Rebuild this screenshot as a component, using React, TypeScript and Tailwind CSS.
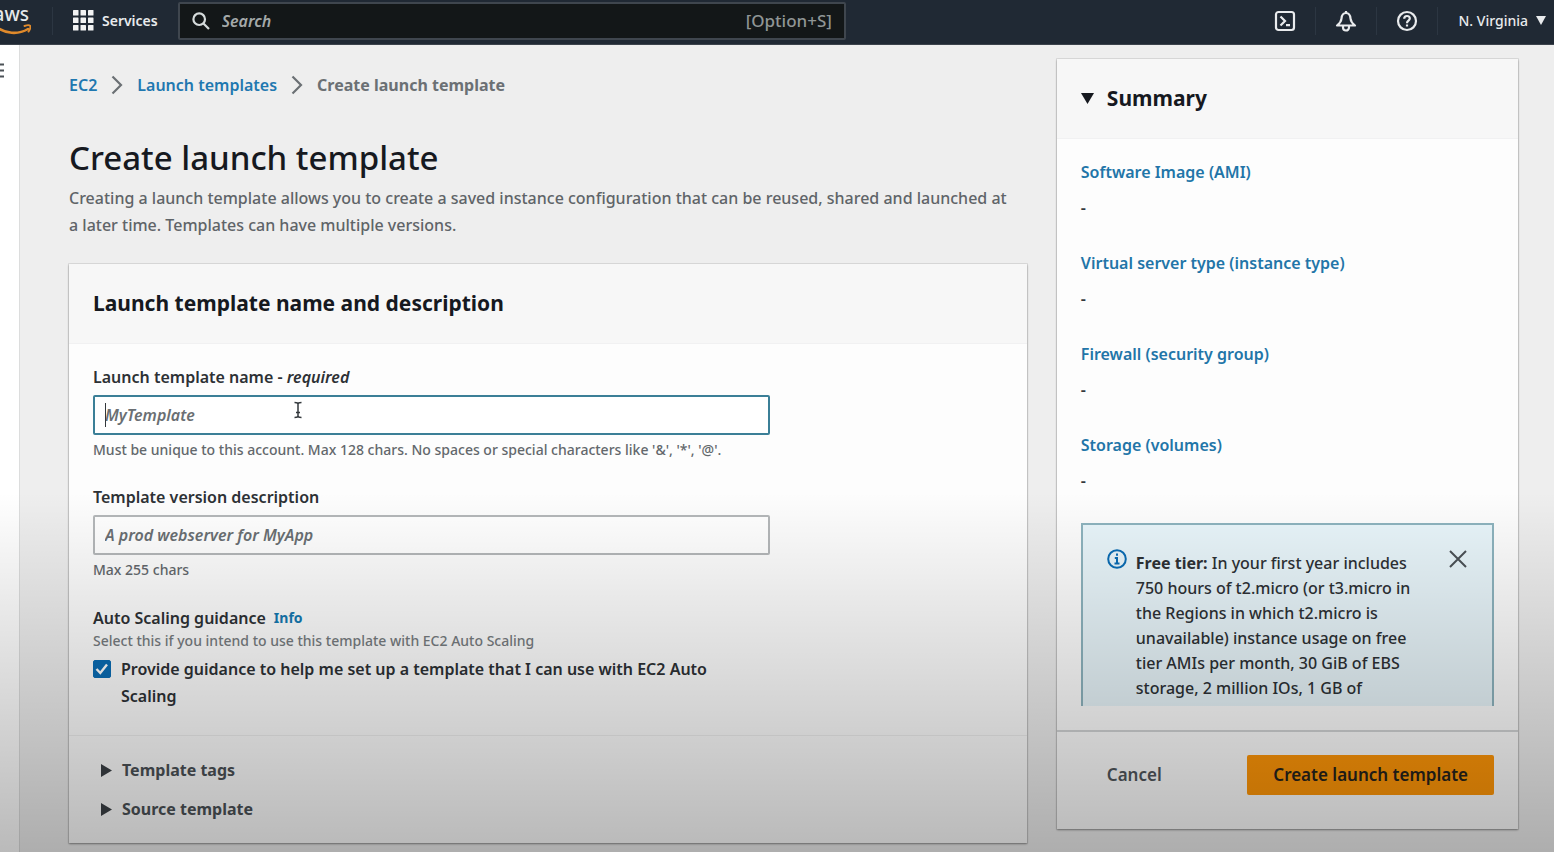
import React from "react";

const summaryItems = [
  "Software Image (AMI)",
  "Virtual server type (instance type)",
  "Firewall (security group)",
  "Storage (volumes)",
];

function AwsLogo() {
  return (
    <svg viewBox="0 0 40 34" className="block h-[34px] w-10 shrink-0" role="img" aria-label="AWS home">
      <text x="38" y="17" textAnchor="end" fontSize="19" fontWeight="500" fill="#e6e8ea" fontFamily="Noto Sans, sans-serif">
        aws
      </text>
      <path d="M5 22.500c9 7.500 22 8.500 32 2.500" fill="none" stroke="#e08a2b" strokeWidth="2.600" strokeLinecap="round" />
      <path d="M33.500 22c2.500-1 5-1 5.800-.2.400 1.700-.4 4-1.800 5.800" fill="none" stroke="#e08a2b" strokeWidth="1.900" strokeLinecap="round" />
    </svg>
  );
}

function GridIcon() {
  const cells = [0, 7.5, 15];
  return (
    <svg viewBox="0 0 21 21" className="size-[21px]" fill="#f2f3f3" aria-hidden="true">
      {cells.map((y) => cells.map((x) => <rect key={`${x}-${y}`} x={x} y={y} width="5.500" height="5.500" rx=".6" />))}
    </svg>
  );
}

function Header() {
  return (
    <header className="flex h-[45px] items-center border-b border-[#3c434c] bg-[#202934] pb-[3px] text-[#e9ebed]">
      <a href="#" className="flex w-[31px] shrink-0 justify-end overflow-hidden">
        <AwsLogo />
      </a>
      <div className="ml-[21px] h-7 w-px bg-[#2c3642]" />
      <button className="ml-5 flex items-center gap-2 text-[14px] font-semibold">
        <GridIcon />
        Services
      </button>
      <label className="ml-5 flex h-[38px] w-[43%] items-center rounded-xs border-2 border-[#3f464e] bg-[#131718] px-3">
        <svg viewBox="0 0 18 18" className="size-[18px] shrink-0" fill="none" stroke="#d5dbdb" strokeWidth="2.200" aria-hidden="true">
          <circle cx="7.200" cy="7.200" r="5.800" />
          <path d="M11.500 11.500 17 17" />
        </svg>
        <input
          aria-label="Search"
          placeholder="Search"
          className="ml-3 min-w-0 flex-1 bg-transparent text-[16px] italic outline-none placeholder:font-semibold placeholder:text-[#a4a9a9]"
        />
        <span className="text-[17px] font-medium text-[#8f9595]">[Option+S]</span>
      </label>
      <div className="ml-auto flex shrink-0 items-center">
        <button aria-label="CloudShell" className="flex w-[60px] justify-center">
          <svg viewBox="0 0 22 22" className="size-[22px]" fill="none" stroke="currentColor" strokeWidth="2.200" aria-hidden="true">
            <rect x="2" y="2" width="18" height="18" rx="2.500" />
            <path d="m6.500 6.500 4.500 4.500-4.500 4.500M12 15.200h4" />
          </svg>
        </button>
        <div className="h-7 w-px bg-[#2c3642]" />
        <button aria-label="Notifications" className="flex w-[60px] justify-center">
          <svg viewBox="0 0 22 22" className="size-[22px]" fill="none" stroke="currentColor" strokeWidth="2.200" strokeLinejoin="round" aria-hidden="true">
            <path d="M11 1v2M2 15.500C5.200 13 6.300 11 6.500 8.500 6.800 5 8.500 3 11 3s4.200 2 4.500 5.500c.2 2.500 1.300 4.500 4.500 7z" />
            <path d="M8 16v1.500a3 3 0 0 0 6 0V16" />
          </svg>
        </button>
        <div className="h-7 w-px bg-[#2c3642]" />
        <button aria-label="Help" className="flex w-[60px] justify-center">
          <svg viewBox="0 0 22 22" className="size-[22px]" fill="none" stroke="currentColor" strokeWidth="2.200" aria-hidden="true">
            <circle cx="11" cy="11" r="9" />
            <path d="M8.200 8.800c0-1.700 1.200-2.800 2.800-2.800s2.800 1 2.800 2.500c0 2.200-2.800 2.200-2.800 4.700" />
            <path d="M11 14.500v2" />
          </svg>
        </button>
        <div className="h-7 w-px bg-[#2c3642]" />
        <button className="ml-5 mr-2 flex items-center gap-2 text-[14px] font-medium">
          N. Virginia
          <svg viewBox="0 0 10 9" className="h-[9px] w-[10px]" fill="currentColor" aria-hidden="true">
            <path d="M0 0h10L5 9z" />
          </svg>
        </button>
      </div>
    </header>
  );
}

function Chevron() {
  return (
    <svg viewBox="0 0 12 20" className="h-5 w-3" fill="none" stroke="#6b7074" strokeWidth="2.200" aria-hidden="true">
      <path d="m1.500 1.500 8.500 8.500-8.500 8.500" />
    </svg>
  );
}

function Expander({ label }: { label: string }) {
  return (
    <button className="flex items-center gap-[10px] text-[16px] leading-[39px] font-bold text-[#4b5156]">
      <svg viewBox="0 0 11 13" className="h-[13px] w-[11px]" fill="#3b4045" aria-hidden="true">
        <path d="M0 0v13l11-6.500z" />
      </svg>
      {label}
    </button>
  );
}

function TemplateForm() {
  return (
    <section className="mt-[25px] bg-[#fdfdfd] shadow-[0_0_0_1px_#00000012,0_1px_2px_#00000060]">
      <div className="border-b border-[#f1f1f2] bg-[#f7f7f7] px-6 pt-6 pb-[25px]">
        <h2 className="text-[21px] leading-[30px] font-bold text-[#16191f]">Launch template name and description</h2>
      </div>
      <div className="px-6 pt-5 pb-[25px] text-[#2d3135]">
        <div className="w-[74.4%] min-w-0">
          <label htmlFor="template-name" className="block text-[16px] leading-[26px] font-semibold">
            Launch template name - <em>required</em>
          </label>
          <div className="relative mt-[5px]">
            <input
              id="template-name"
              placeholder="MyTemplate"
              className="block h-10 w-full rounded-xs border-2 border-[#3b7f97] bg-white px-[10px] text-[16px] italic outline-none placeholder:font-semibold placeholder:text-[#6a6f73]"
            />
            <span className="absolute top-2 left-3 h-6 w-px bg-[#33383c]" />
            <svg viewBox="0 0 10 18" className="absolute top-1.5 left-[200px] h-[18px] w-[10px]" fill="none" stroke="#33383c" strokeWidth="1.500" aria-hidden="true">
              <path d="M1.500 1.500c2 0 3.500.3 3.500 1.500v12c0 1.200-1.500 1.500-3.500 1.500M8.500 1.500C6.500 1.500 5 1.800 5 3M5 15c0 1.200 1.500 1.500 3.500 1.500M3 11.500h4" />
            </svg>
          </div>
          <p className="mt-1 text-[14px] leading-[22px] font-medium text-[#63686c]">
            Must be unique to this account. Max 128 chars. No spaces or special characters like '&amp;', '*', '@'.
          </p>

          <label htmlFor="template-description" className="mt-[23px] block text-[16px] leading-[26px] font-semibold">
            Template version description
          </label>
          <input
            id="template-description"
            placeholder="A prod webserver for MyApp"
            className="mt-[5px] block h-10 w-full rounded-xs border-2 border-[#b4b7b9] bg-white px-[10px] text-[16px] italic outline-none placeholder:font-semibold placeholder:text-[#6a6f73]"
          />
          <p className="mt-1 text-[14px] leading-[22px] font-medium text-[#63686c]">Max 255 chars</p>

          <div className="mt-6 flex items-center gap-2 text-[16px] leading-[26px] font-semibold">
            Auto Scaling guidance
            <a href="#" className="text-[14px] font-bold text-[#1478b0]">Info</a>
          </div>
          <p className="text-[14px] leading-5 font-medium text-[#777c80]">Select this if you intend to use this template with EC2 Auto Scaling</p>
          <label className="mt-[5px] flex items-start gap-[10px] text-[16px] leading-[27px] font-semibold">
            <span className="relative mt-1 block size-[18px] shrink-0">
              <input type="checkbox" defaultChecked className="peer block size-[18px] appearance-none rounded-xs border border-[#80868a] bg-white checked:border-[#0a6cb4] checked:bg-[#0a6cb4]" />
              <svg viewBox="0 0 18 18" className="pointer-events-none absolute inset-0 hidden size-[18px] peer-checked:block" fill="none" stroke="white" strokeWidth="2.400" aria-hidden="true">
                <path d="m3.500 9 3.800 4 6.700-8.500" />
              </svg>
            </span>
            <span className="max-w-[600px]">
              Provide guidance to help me set up a template that I can use with EC2 Auto Scaling
            </span>
          </label>
        </div>
      </div>
      <div className="flex flex-col items-start border-t border-[#eeefef] px-8 pt-[15px] pb-[14px]">
        <Expander label="Template tags" />
        <Expander label="Source template" />
      </div>
    </section>
  );
}

function Summary() {
  return (
    <aside className="mt-[14px] self-start bg-[#fdfdfd] shadow-[0_0_0_1px_#00000012,0_1px_2px_#00000060]">
      <div className="border-b border-[#f1f1f2] bg-[#f7f7f7] px-6 pt-6 pb-[25px]">
        <h2>
          <button className="flex items-center gap-[13px] text-[21px] leading-[30px] font-bold text-[#16191f]">
            <svg viewBox="0 0 13 11" className="h-[11px] w-[13px]" fill="currentColor" aria-hidden="true">
              <path d="M0 0h13L6.500 11z" />
            </svg>
            Summary
          </button>
        </h2>
      </div>
      <div className="max-h-[calc(100vh-285px)] overflow-y-auto px-6 pt-5 [scrollbar-width:none]">
        <dl>
          {summaryItems.map((item) => (
            <div key={item} className="mb-6 text-[16px]">
              <dt className="leading-[27px] font-semibold">
                <a href="#" className="text-[#2275a8]">{item}</a>
              </dt>
              <dd className="mt-1 leading-9 font-semibold text-[#33383c]">-</dd>
            </div>
          ))}
        </dl>
        <div className="flex items-start border-2 border-[#8db3be] bg-[#e8f5fa] px-6 pt-6 pb-6">
          <svg viewBox="0 0 20 20" className="size-5 shrink-0" fill="none" stroke="#0a6cb4" strokeWidth="2" aria-hidden="true">
            <circle cx="10" cy="10" r="8.800" />
            <path d="M10 4.500v2.200M7.800 9H10v5.500M7.500 14.500h5" />
          </svg>
          <p className="ml-[9px] min-w-0 flex-1 pt-0.5 text-[16px] leading-[25px] font-medium text-[#2d3135]">
            <b>Free tier:</b> In your first year includes 750 hours of t2.micro (or t3.micro in the Regions in which
            t2.micro is unavailable) instance usage on free tier AMIs per month, 30 GiB of EBS storage, 2 million IOs,
            1 GB of
          </p>
          <button aria-label="Dismiss" className="ml-6">
            <svg viewBox="0 0 20 20" className="size-5" fill="none" stroke="#4b5156" strokeWidth="2" aria-hidden="true">
              <path d="m2 2 16 16M18 2 2 18" />
            </svg>
          </button>
        </div>
      </div>
      <div className="mt-6 flex items-center justify-between border-t-2 border-[#d2d4d5] px-6 pt-[23px] pb-[34px]">
        <button className="px-[26px] text-[17px] font-semibold text-[#50565b]">Cancel</button>
        <button className="h-10 rounded-xs bg-[#ff9608] px-[26px] text-[17px] font-semibold text-[#26221c]">
          Create launch template
        </button>
      </div>
    </aside>
  );
}

export default function App() {
  return (
    <div className="relative flex min-h-screen flex-col bg-[#eeeeee] font-['Noto_Sans',sans-serif]">
      <Header />
      <div className="flex flex-1">
        <nav className="w-5 shrink-0 border-r border-[#dcdddd] bg-white pt-[18px]">
          <button aria-label="Open navigation" className="block">
            <svg viewBox="0 0 4 15" className="h-[15px] w-1" stroke="#4b5156" strokeWidth="2" aria-hidden="true">
              <path d="M0 1.500h4M0 7.500h4M0 13.500h4" />
            </svg>
          </button>
        </nav>
        <main className="grid flex-1 grid-cols-[minmax(0,27fr)_minmax(0,13fr)] gap-x-[30px] pr-9 pl-[49px]">
          <div className="min-w-0 pb-2">
            <nav aria-label="Breadcrumb" className="mt-[26px] flex items-center gap-[14px] text-[16px] leading-7 font-semibold">
              <a href="#" className="text-[#1f78b0]">EC2</a>
              <Chevron />
              <a href="#" className="text-[#1f78b0]">Launch templates</a>
              <Chevron />
              <span className="font-bold text-[#6b7074]">Create launch template</span>
            </nav>
            <h1 className="mt-9 text-[33px] leading-[46px] font-medium text-[#16191f]">Create launch template</h1>
            <p className="mt-1 pr-3 text-[16px] leading-[27px] font-medium text-[#5f6468]">
              Creating a launch template allows you to create a saved instance configuration that can be reused, shared
              and launched at a later time. Templates can have multiple versions.
            </p>
            <TemplateForm />
          </div>
          <Summary />
        </main>
      </div>
      <div className="pointer-events-none absolute inset-x-0 bottom-0 h-[360px] bg-linear-to-b from-black/0 to-black/27" />
    </div>
  );
}
